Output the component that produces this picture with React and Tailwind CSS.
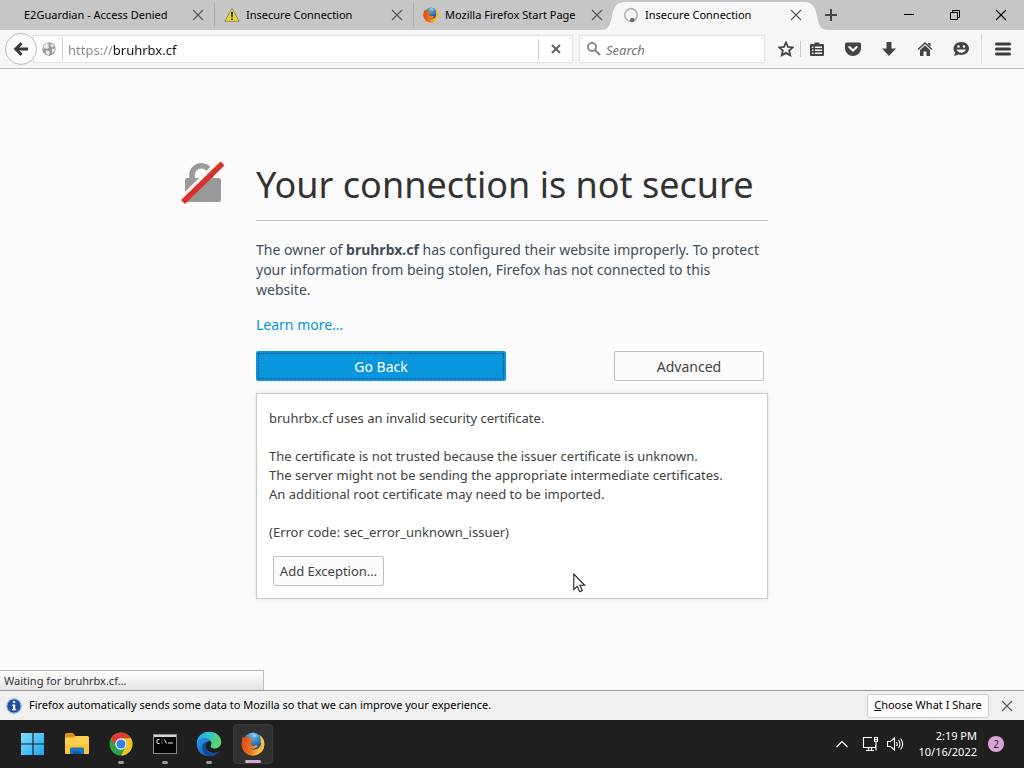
import React from 'react';

function Firefox({ className }) {
  return (
    <svg viewBox="0 0 32 32" className={className} aria-hidden="true">
      <defs>
        <linearGradient id="fxBody" x1="0" y1="0.4" x2="1" y2="0.6">
          <stop offset="0" stopColor="#dc4a1a" />
          <stop offset="0.55" stopColor="#ee7320" />
          <stop offset="1" stopColor="#fcc03a" />
        </linearGradient>
        <radialGradient id="fxGlobe" cx="0.5" cy="0.15" r="0.85">
          <stop offset="0" stopColor="#6cc4ea" />
          <stop offset="0.5" stopColor="#2f86c8" />
          <stop offset="1" stopColor="#173a75" />
        </radialGradient>
      </defs>
      <circle cx="16" cy="16.500" r="15" fill="url(#fxBody)" />
      <circle cx="16" cy="12.300" r="11.500" fill="url(#fxGlobe)" />
      <path d="M24 3.500c6 4 8 9 7 14-1 8-8 13.500-15 13.500 7-3 11-7 11-13 0-2-.3-3.600-.9-5C27 10 26 6.500 24 3.500z" fill="#fcbf3a" />
      <path d="M2.800 5c.1 1.600.6 2.800 1.200 3.500 1.800-.9 4-.9 5.800-.5 1-1.400 2.300-2.100 3.900-2.300-1 1-1.500 2-1.400 3.200 1.200.7 2.700.5 4 .8.2 1.600-1.500 2.300-3 3.200-.5 1.200-.1 2.300-1 2.900 1.500 2.700 4 3.300 6.500 2.300 1.400-.5 2.600-.5 3.400.5-2 3.400-6 4.600-9.500 3 3.500 3 9 2.800 12.300-1L25 26l-9 5C7.500 31 1 24.500 1 16.500 1 12 1.400 8.500 2.800 5z" fill="url(#fxBody)" />
      <path d="M16 2.500c3 0 5 1.500 6 3.500-2-.5-3 .5-4.500.5C16.500 5.500 16 4 16 2.500z" fill="#a5ddf3" opacity="0.7" />
    </svg>
  );
}

function Chrome({ className }) {
  return (
    <svg viewBox="0 0 48 48" className={className} aria-hidden="true">
      <circle cx="24" cy="24" r="23" fill="#2da14c" />
      <path d="M4.100 12.500A23 23 0 0 1 43.900 12.500H24A11.500 11.500 0 0 0 14 29.800z" fill="#e33b2e" />
      <path d="M43.900 12.500A23 23 0 0 1 24 47L34 29.800A11.500 11.500 0 0 0 24 12.500z" fill="#fbc116" />
      <circle cx="24" cy="24" r="11.500" fill="#fff" />
      <circle cx="24" cy="24" r="9" fill="#3b7de9" />
    </svg>
  );
}

function Edge({ className }) {
  return (
    <svg viewBox="0 0 32 32" className={className} aria-hidden="true">
      <defs>
        <linearGradient id="edTop" x1="0" y1="0.3" x2="1" y2="0.5">
          <stop offset="0" stopColor="#2aa6e4" />
          <stop offset="0.5" stopColor="#36c6c8" />
          <stop offset="1" stopColor="#5fdc58" />
        </linearGradient>
        <linearGradient id="edLow" x1="0" y1="0" x2="0.8" y2="1">
          <stop offset="0" stopColor="#2196e8" />
          <stop offset="1" stopColor="#1463bd" />
        </linearGradient>
      </defs>
      <path d="M1 15C1 7 7.500 1 16 1c9 0 15 6 15 12.500 0 5-3.500 8-8 8-3.500 0-5-1.500-5-2.500 0-.7 1-1.200 1-3.500 0-3-3-6-8-6-6 0-9.500 3-10 5.500z" fill="url(#edTop)" />
      <path d="M1 15c.4-3.500 4.500-6.500 9.500-6.500 3.500 0 6.500 1.500 7.800 3.800-3.500-.8-6.800 2-6.800 6.200 0 6.500 7.500 9.500 14.500 8.500C23.500 29.800 20 31 16 31 7.500 31 1 24.500 1 16z" fill="url(#edLow)" />
      <path d="M11.500 18.500c0 6 6 9.700 12 8.300 2-.4 3.800-1.500 5-2.300.5-.3 1 .1.600.7-2.500 3.800-7.500 6-13 5.800-5-1-8.600-5.500-8.600-10.500 0-4 2.500-7 6-8-1.300 1.500-2 3.500-2 6z" fill="#124a99" />
    </svg>
  );
}

function Folder() {
  return (
    <svg viewBox="0 0 26 24" className="h-6 w-[26px]" aria-hidden="true">
      <path d="M1 2.500Q1 1 2.500 1H9l2.500 3H17v5H1z" fill="#d9930f" />
      <path d="M1 5.500h9L12 4h11.500Q25 4 25 5.500v15q0 1.500-1.500 1.500h-21Q1 22 1 20.500z" fill="#fdd052" />
      <path d="M1 13h24v7.500q0 1.500-1.500 1.500h-21Q1 22 1 20.500z" fill="#fbc02f" opacity="0.7" />
      <path d="M6 22v-5q0-1.500 1.500-1.500h11Q20 15.500 20 17v5z" fill="#1a76c2" />
      <path d="M9 22v-2.500h8V22z" fill="#0c5a9c" />
    </svg>
  );
}

function Terminal() {
  return (
    <svg viewBox="0 0 24 20" className="h-5 w-6" aria-hidden="true">
      <rect x="0.500" y="0.500" width="23" height="19" fill="#050505" stroke="#8d8d8d" />
      <rect x="1" y="1" width="22" height="2" fill="#d6d6d6" />
      <path d="M6.500 5.500h-2l-.5.500v3l.5.500h2M9 6.500v.8M9 8.700v.8M11.500 5.500l2 4M15 9h5" stroke="#e8e8e8" fill="none" />
    </svg>
  );
}

function WindowsLogo() {
  return (
    <svg viewBox="0 0 24 24" className="h-6 w-6" aria-hidden="true">
      <defs>
        <linearGradient id="winLogo" gradientUnits="userSpaceOnUse" x1="0" y1="0" x2="24" y2="24">
          <stop offset="0" stopColor="#7fe0ff" />
          <stop offset="1" stopColor="#19a3ee" />
        </linearGradient>
      </defs>
      <path d="M0 1h11.400v10.400H0zM12.600 1H23v10.400H12.600zM0 12.600h11.400V23H0zM12.600 12.600H23V23H12.600z" fill="url(#winLogo)" />
    </svg>
  );
}

function Cross({ className = 'h-3 w-3' }) {
  return (
    <svg viewBox="0 0 12 12" className={className} fill="none" stroke="currentColor" aria-hidden="true">
      <path d="M1 1l10 10M11 1L1 11" strokeWidth="1.100" />
    </svg>
  );
}

function Warning() {
  return (
    <svg viewBox="0 0 16 16" className="h-4 w-4" aria-hidden="true">
      <path d="M8 1.200 15.200 14.300H.8z" fill="#e6d62c" stroke="#8f8b6a" strokeLinejoin="round" />
      <path d="M7 5h2l-.4 5.500H7.400zM7.200 11.500h1.600V13H7.200z" fill="#222" />
    </svg>
  );
}

function Spinner() {
  return (
    <svg viewBox="0 0 16 16" className="h-4 w-4" aria-hidden="true">
      <circle cx="8" cy="8" r="6.300" fill="none" stroke="#b4b4b4" strokeWidth="1.700" />
      <circle cx="9.300" cy="13" r="2.300" fill="#6c6c6c" />
    </svg>
  );
}

function Tab({ icon, title, wide, divider }) {
  return (
    <div className={`relative flex h-full min-w-0 shrink items-center ${wide ? 'w-[215px] pl-6' : 'w-[199px] pl-[9px]'}`}>
      {icon && <span className="mr-1.5 shrink-0">{icon}</span>}
      <button role="tab" className="min-w-0 flex-1 truncate text-left">{title}</button>
      <button aria-label={`Close ${title}`} className="mr-2.5 shrink-0 text-[#555]"><Cross /></button>
      {divider && <span className="h-6 w-px bg-[#aaa]" />}
    </div>
  );
}

function ActiveTab() {
  return (
    <div className="relative flex h-full w-[199px] min-w-0 items-center">
      <div className="absolute -left-3 -right-4 bottom-0 top-0.5 flex">
        <svg viewBox="0 0 24 28" className="h-full w-6 shrink-0" preserveAspectRatio="none" aria-hidden="true">
          <path d="M0 28C8 28 9.500 22 11 14S15 0 24 0V28z" fill="#f6f6f6" />
        </svg>
        <div className="flex-1 bg-[#f6f6f6]" />
        <svg viewBox="0 0 24 28" className="h-full w-6 shrink-0" preserveAspectRatio="none" aria-hidden="true">
          <path d="M24 28C16 28 14.500 22 13 14S9 0 0 0V28z" fill="#f6f6f6" />
        </svg>
      </div>
      <div className="relative flex w-full items-center pl-2.5">
        <span className="mr-1.5"><Spinner /></span>
        <button role="tab" aria-selected="true" className="min-w-0 flex-1 truncate text-left">Insecure Connection</button>
        <button aria-label="Close Insecure Connection" className="mr-2.5 text-[#555]"><Cross /></button>
      </div>
    </div>
  );
}

function TabStrip() {
  return (
    <header className="flex h-[30px] items-center bg-[#c6c6c6] text-[11px] text-black">
      <div role="tablist" className="flex h-full min-w-0">
        <Tab title="E2Guardian - Access Denied" wide divider />
        <Tab title="Insecure Connection" icon={<Warning />} divider />
        <Tab title="Mozilla Firefox Start Page" icon={<Firefox className="h-4 w-4" />} />
        <ActiveTab />
      </div>
      <button aria-label="New tab" className="ml-[13px] text-[#444]">
        <svg viewBox="0 0 12 12" className="h-3 w-3" aria-hidden="true">
          <path d="M6 0v12M0 6h12" stroke="currentColor" strokeWidth="2" />
        </svg>
      </button>
      <div className="ml-auto flex h-7 text-black">
        <button aria-label="Minimize" className="flex w-[46px] items-center justify-center">
          <svg viewBox="0 0 10 10" className="h-2.5 w-2.5" stroke="currentColor" aria-hidden="true"><path d="M0 4.500h10" /></svg>
        </button>
        <button aria-label="Restore" className="flex w-[46px] items-center justify-center">
          <svg viewBox="0 0 10 10" className="h-2.5 w-2.5" fill="none" stroke="currentColor" aria-hidden="true">
            <path d="M.5 2.500h7v7h-7zM2.500 2.500v-2h7v7h-2" />
          </svg>
        </button>
        <button aria-label="Close window" className="flex w-[46px] items-center justify-center"><Cross className="h-3 w-3" /></button>
      </div>
    </header>
  );
}

function ToolButton({ label, children }) {
  return (
    <button aria-label={label} className="flex h-full w-9 shrink-0 items-center justify-center">
      <svg viewBox="0 0 16 16" className="h-4 w-4" fill="#444" aria-hidden="true">{children}</svg>
    </button>
  );
}

function NavBar() {
  return (
    <nav className="flex h-[39px] items-center border-b border-[#bdbdbd] bg-[#f6f6f6] pl-[5px] text-[#444]">
      <button aria-label="Back" className="z-10 -mr-1 flex h-8 w-8 shrink-0 items-center justify-center rounded-full border border-[#bbb] bg-[#fbfbfb]">
        <svg viewBox="0 0 16 16" className="h-4 w-4" aria-hidden="true">
          <path d="M8.500 2.200 2.700 8l5.800 5.800M3 8h12" fill="none" stroke="#3a3a3a" strokeWidth="3" />
        </svg>
      </button>
      <div className="flex h-7 min-w-0 flex-1 items-center border border-[#e0e0e0] bg-white pl-[7px]">
        <svg viewBox="0 0 16 16" className="h-4 w-4 shrink-0" aria-hidden="true">
          <circle cx="8" cy="8" r="6.700" fill="#9a9a9a" />
          <path d="M3 4.500 6 2l2 1-1 2 1.500 1L6 8 4 7 2.500 8zM10 2.500l3 2.500-1 1.500L9.500 5zM5 9.500l3 .5 1 2-2 2-2-1.500zM11 8l3-.5-.5 3L11 12z" fill="#ececec" />
        </svg>
        <span className="mx-[5px] h-6 w-px shrink-0 bg-[#d5d5d5]" />
        <input
          aria-label="Address"
          defaultValue="https://bruhrbx.cf"
          className="min-w-0 flex-1 bg-[linear-gradient(to_right,#8a8a8a_45px,#111_45px)] bg-clip-text pt-1 text-[13px] text-transparent outline-none"
        />
        <span className="h-5 w-px bg-[#ccc]" />
        <button aria-label="Stop" className="flex w-[33px] items-center justify-center">
          <svg viewBox="0 0 10 10" className="h-2.5 w-2.5" aria-hidden="true">
            <path d="M1 1l8 8M9 1L1 9" stroke="#666" strokeWidth="2.200" />
          </svg>
        </button>
      </div>
      <div className="ml-1.5 flex h-7 w-[186px] items-center border border-[#e0e0e0] bg-white pl-1.5">
        <svg viewBox="0 0 16 16" className="h-4 w-4 shrink-0" fill="none" stroke="#8a8a8a" aria-hidden="true">
          <circle cx="6" cy="6" r="4" strokeWidth="2" />
          <path d="M9 9l5 5" strokeWidth="2.400" />
        </svg>
        <input aria-label="Search" placeholder="Search" className="ml-1 min-w-0 flex-1 pt-1 text-[13px] italic outline-none placeholder:text-[#757575]" />
      </div>
      <div className="flex h-full items-center pl-[3px]">
        <ToolButton label="Bookmark this page">
          <path d="M8 1.500l2 4.400 4.700.5-3.500 3.200 1 4.700L8 11.900l-4.200 2.400 1-4.700L1.300 6.400 6 5.900z" fill="none" stroke="#444" strokeWidth="1.800" />
        </ToolButton>
        <span className="-ml-1 h-4 w-px bg-[#ccc]" />
        <div className="-ml-0.5 flex h-full">
          <ToolButton label="Bookmarks list">
            <path fillRule="evenodd" d="M2 3h3.500V1.500h5V3H14q1 0 1 1v10q0 1-1 1H2q-1 0-1-1V4q0-1 1-1zM3 5.500V7h1.500V5.500zM6 5.500V7h7V5.500zM3 8.500V10h1.500V8.500zM6 8.500V10h7V8.500zM3 11.500V13h1.500v-1.500zM6 11.500V13h7v-1.500z" />
          </ToolButton>
          <ToolButton label="Save to Pocket">
            <path d="M1.500 1.500h13Q16 1.500 16 3v4.500a8 7.500 0 0 1-16 0V3Q0 1.500 1.500 1.500z" />
            <path d="M4.300 6 8 9.500 11.700 6" fill="none" stroke="#fff" strokeWidth="2" strokeLinecap="round" />
          </ToolButton>
          <ToolButton label="Downloads"><path d="M5.500 1h5v6.500H15L8 15 1 7.500h4.500z" /></ToolButton>
          <ToolButton label="Home">
            <path d="M8 1l7.500 7-1 1L8 3 1.500 9l-1-1zM11 2h2.500v3.500L11 3z" />
            <path d="M8 4.500 13 9v6H9.500v-4.500h-3V15H3V9z" />
          </ToolButton>
          <ToolButton label="Chat">
            <path d="M8.300 1C12.500 1 16 3.800 16 7.500S12.500 14 8.300 14c-1 0-2-.1-2.800-.4L1 15l1.300-3.200C1 10.700.5 9 .5 7.500.5 3.800 4 1 8.300 1z" />
            <circle cx="5.500" cy="5.500" r="1.300" fill="#f6f6f6" />
            <circle cx="11" cy="5.500" r="1.300" fill="#f6f6f6" />
            <path d="M3.500 8.500h9.500c-.5 2-2.500 3.200-4.700 3.200S4 10.500 3.500 8.500z" fill="#f6f6f6" />
          </ToolButton>
        </div>
        <span className="ml-0.5 h-[30px] w-px bg-[#dcdcdc]" />
        <button aria-label="Open menu" className="flex h-full w-[42px] items-center justify-center">
          <svg viewBox="0 0 16 14" className="h-3.5 w-4" aria-hidden="true">
            <path d="M1.500 2h13M1.500 7h13M1.500 12h13" stroke="#3c3c3c" strokeWidth="3" strokeLinecap="round" />
          </svg>
        </button>
      </div>
    </nav>
  );
}

function BrokenLock() {
  return (
    <svg viewBox="0 0 44 44" className="h-11 w-11" aria-hidden="true">
      <path d="M11 20v-5a9.300 9.300 0 0 1 18.600 0v5" fill="none" stroke="#999" strokeWidth="5.500" />
      <rect x="4" y="18" width="36" height="24" rx="2.500" fill="#999" />
      <path d="M1 40.500 40 2" stroke="#fcf5ee" strokeWidth="8" />
      <path d="M2 42 41.500 3.500" stroke="#d6302a" strokeWidth="5.500" />
    </svg>
  );
}

function ErrorPage() {
  return (
    <main className="relative flex flex-1 items-center justify-center bg-[#fbfbfb] text-[#424e5a]">
      <div className="relative w-full max-w-lg">
        <div className="absolute -left-[75px] top-0"><BrokenLock /></div>
        <h1 className="border-b border-[#c1c1c1] pb-2.5 text-[36px] leading-[50px] text-[#333]">Your connection is not secure</h1>
        <p className="mt-[19px] text-[14px] leading-5">
          The owner of <b>bruhrbx.cf</b> has configured their website improperly. To protect your information from being stolen, Firefox has not connected to this website.
        </p>
        <p className="mt-[15px] text-[14px] leading-5"><a href="#learn" className="text-[#0095dd]">Learn more…</a></p>
        <div className="mt-4 flex justify-between pr-1 text-[14px]">
          <button className="h-[30px] w-[250px] rounded-xs bg-[#0996dd] p-0.5 text-white">
            <span className="flex h-full items-center justify-center border border-dotted border-[#06396b]">Go Back</span>
          </button>
          <button className="h-[30px] w-[150px] rounded-xs border border-[#c1c1c1] bg-[#fbfbfb] text-[#444]">Advanced</button>
        </div>
        <section className="mt-3 border border-[#c8c8c8] bg-white px-3 pb-3 pt-[15px] text-[13px] leading-[19px] text-[#424242] shadow-[0_0_4px_#ddd]">
          <p>bruhrbx.cf uses an invalid security certificate.</p>
          <p className="mt-[19px]">
            The certificate is not trusted because the issuer certificate is unknown.<br />
            The server might not be sending the appropriate intermediate certificates.<br />
            An additional root certificate may need to be imported.
          </p>
          <p className="mt-[19px]">(Error code: sec_error_unknown_issuer)</p>
          <button className="ml-1 mt-3.5 block h-[30px] w-[111px] rounded-xs border border-[#c1c1c1] bg-[#fbfbfb] text-[13px]">Add Exception…</button>
        </section>
      </div>
      <div role="status" className="absolute bottom-0 left-0 h-5 w-[264px] border-r border-t border-[#bbb] bg-linear-to-b from-white to-[#e4e4e4] pl-1 text-[11px] leading-5 text-[#333]">
        Waiting for bruhrbx.cf…
      </div>
      <svg viewBox="0 0 13 20" className="absolute left-[573px] top-[504px] h-5 w-[13px]" aria-hidden="true">
        <path d="M.8 1v15.500l3.500-3.200 2.400 5.500 2.600-1.200-2.400-5.300h4.800z" fill="#fff" stroke="#222" strokeWidth="1.100" />
      </svg>
    </main>
  );
}

function NotificationBar() {
  return (
    <aside className="flex h-[30px] items-center border-t border-[#999] bg-[#f0f0f0] pl-1.5 pr-[11px] text-[11px] text-black">
      <svg viewBox="0 0 16 16" className="h-4 w-4 shrink-0" aria-hidden="true">
        <circle cx="8" cy="8" r="7.200" fill="#1e4fa3" stroke="#9fb2d0" strokeWidth="1.200" />
        <path d="M7 3h2.200v2H7zM6.200 6.500h3V11h1v1.300H6V11h1V7.700h-.8z" fill="#fff" />
      </svg>
      <p className="ml-[7px] flex-1">Firefox automatically sends some data to Mozilla so that we can improve your experience.</p>
      <button className="h-6 w-[122px] rounded-xs border border-[#ccc] bg-[#fdfdfd]"><u>C</u>hoose What I Share</button>
      <button aria-label="Dismiss" className="ml-3 text-[#555]"><Cross /></button>
    </aside>
  );
}

function TaskItem({ label, running, active, children }) {
  return (
    <button aria-label={label} className={`relative flex h-10 w-10 items-center justify-center rounded ${active ? 'border border-[#3a3a3a] bg-[#303030]' : ''}`}>
      {children}
      {running && <span className="absolute bottom-0 left-1/2 h-[3px] w-1.5 -translate-x-1/2 rounded-full bg-[#9a9a9a]" />}
      {active && <span className="absolute bottom-0 left-1/2 h-[3px] w-4 -translate-x-1/2 rounded-full bg-[#d9a5d9]" />}
    </button>
  );
}

function Taskbar() {
  return (
    <footer className="flex h-12 items-center bg-[#1f1f1f] pl-[13px] pr-3 text-white">
      <div className="flex gap-1">
        <TaskItem label="Start"><WindowsLogo /></TaskItem>
        <TaskItem label="File Explorer"><Folder /></TaskItem>
        <TaskItem label="Chrome" running><Chrome className="h-6 w-6" /></TaskItem>
        <TaskItem label="Command Prompt" running><Terminal /></TaskItem>
        <TaskItem label="Edge" running><Edge className="h-[26px] w-[26px]" /></TaskItem>
        <TaskItem label="Firefox" active><Firefox className="h-6 w-6" /></TaskItem>
      </div>
      <div className="ml-auto flex items-center">
        <svg viewBox="0 0 12 8" className="mr-3.5 h-2 w-3" fill="none" stroke="#fff" aria-hidden="true"><path d="M.5 7 6 1.500 11.500 7" strokeWidth="1.200" /></svg>
        <svg viewBox="0 0 18 16" className="mr-1.5 h-4 w-[18px]" fill="none" stroke="#fff" aria-hidden="true">
          <path d="M10 1.500H1.500v10H13.500V9M4 14.500h8M6.500 11.500v3M9.500 11.500v3M12.500 1.500h3v4h-3zM14 5.500v9M12.500 3.500h3" strokeWidth="1.100" />
        </svg>
        <svg viewBox="0 0 18 16" className="mr-3.5 h-4 w-[18px]" fill="none" stroke="#fff" aria-hidden="true">
          <path d="M1.500 5.500h3l4-3.500v12l-4-3.500h-3zM10.500 6q1.500 2 0 4M12.500 4q3 4 0 8M14.500 2.500q4.500 5.500 0 11" strokeWidth="1.100" />
        </svg>
        <time className="text-right text-[11px] leading-4">2:19 PM<br />10/16/2022</time>
        <span className="ml-[11px] mr-2 flex h-4 w-4 items-center justify-center rounded-full bg-[#d9a5d9] text-[10px] text-[#222]">2</span>
      </div>
    </footer>
  );
}

export default function App() {
  return (
    <div className="flex min-h-screen flex-col overflow-hidden font-['Noto_Sans','Open_Sans',sans-serif]">
      <TabStrip />
      <NavBar />
      <ErrorPage />
      <NotificationBar />
      <Taskbar />
    </div>
  );
}
